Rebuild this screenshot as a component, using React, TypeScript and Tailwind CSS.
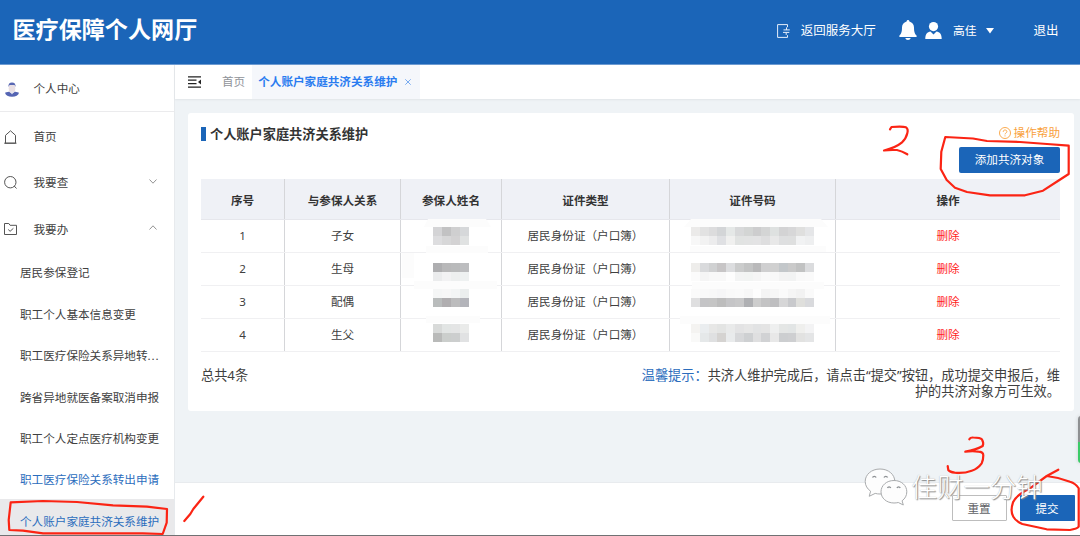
import clsx from "clsx";

const submenu = [
  { label: "居民参保登记" },
  { label: "职工个人基本信息变更" },
  { label: "职工医疗保险关系异地转", cut: true },
  { label: "跨省异地就医备案取消申报" },
  { label: "职工个人定点医疗机构变更" },
  { label: "职工医疗保险关系转出申请", visited: true },
  { label: "个人账户家庭共济关系维护", active: true },
];

const columns = ["序号", "与参保人关系", "参保人姓名", "证件类型", "证件号码", "操作"];

// Masked cells: two lines of grey tiles each
const rows = [
  {
    relation: "子女",
    shift: "top-0",
    name: ["#d4d4d6 #c2c2c3 #cfcfd0 #d6d8da", "#dddddf #d7d7d8 #d3d2d3 #e0e2e2"],
    code: [
      "#ebeae9 #e2e2e2 #dcdcdd #d3d5d7 #e5e8e7 #d8d9da #d3d5d4 #cdcdce #d4d5d5 #dee1e0 #d3d3d4 #d7d7d8 #dfdfde #e5e6e8",
      "#f7f7f7 #f2f2f2 #ececed #dfe0e3 #f0f0ef #e1e3e2 #e2e3e3 #e3e3e4 #dededf #e8e8e8 #dedfe0 #dedfdf #f1f2f3 #eeeff0",
    ],
  },
  {
    relation: "生母",
    shift: "top-[3px]",
    name: ["#aeaeb0 #b8b8b9 #b9babb #bcbdbf", "#ebeced #f2f2f3 #edefef #eef1f1"],
    code: [
      "#eeedeb #d9dadc #d0d1d2 #c7c5c6 #dcdddf #cbcccc #c3c4c4 #b9b9ba #cfcfd0 #d0d0d0 #c3c7ca #cacaca #c1c2c2 #dbdcde",
      "#fbfbfb #f5f5f5 #f8f8f8 #f8f8f8 #fdfdfd #f3f4f4 #f2f4f3 #f5f5f5 #f9f9f9 #f8f8f8 #f3f3f3 #f2f3f3 #f9f9f9 #fafafa",
    ],
  },
  {
    relation: "配偶",
    shift: "-top-1",
    name: ["#f5f6f6 #f7f7f7 #f3f5f5 #ebeeee", "#b9bcbc #b0aeb0 #bcbcbd #b3b4ba"],
    code: [
      "#fafafa #f9f9f9 #f8f8f8 #f6f6f7 #f9f9f9 #fafafa #f7f7f7 #fdfdfd #f4f4f4 #f6f6f6 #fafafa #f5f5f5 #f2f2f2 #fafafa",
      "#dfdfe0 #c4c4c6 #c5c5c5 #bdbdbd #c5c5c7 #c8c8c9 #afb0b3 #cdcdcd #c3c3c4 #bebec0 #d6d6d7 #c8c9cc #dfdfdc #d9dadd",
    ],
  },
  {
    relation: "生父",
    shift: "-top-0.5",
    name: ["#d8dad9 #e2e5e4 #e4e5e5 #eaebea", "#b9bab9 #cbcecc #cccece #e1e2e3"],
    code: [
      "#f4f3f1 #eaedef #e7e7e6 #e3e4e3 #e9eaea #e3e3e4 #e6e6e6 #e2e3e4 #e4e4e4 #eeefef #e4e6e5 #e2e5e5 #efefed #f3f3f4",
      "#f9f9f8 #e5e8e9 #dfe0e1 #d5d3d1 #e9ebec #d7d8da #ced0d2 #dfdfe0 #d1d2d4 #e8e8e8 #ccced0 #cecfd1 #e2e2e1 #e4e5e6",
    ],
  },
];

const grid = "grid grid-cols-[84px_116px_101px_168px_166px_1fr]";

function Mosaic({ lines, shift }: { lines: string[]; shift: string }) {
  return (
    <div className={clsx("relative bg-[#fdfdfd]", shift)}>
      {lines.map((line, i) => (
        <div key={i} className="flex">
          {line.split(" ").map((color, j) => (
            <span key={j} className="h-[9px] w-[8.8px]" style={{ backgroundColor: color }} />
          ))}
        </div>
      ))}
    </div>
  );
}

function Header() {
  return (
    <header className="flex h-[65px] shrink-0 items-center border-b border-[#6d9bd2] bg-[#1b65b8] pb-1 pl-[12.500px] pr-[21.500px] text-white">
      <h1 className="text-[23.1px] font-bold leading-none">医疗保障个人网厅</h1>
      <div className="ml-auto mt-0.5 flex items-center text-[12.5px]">
        <svg className="h-[14px] w-[13px]" viewBox="0 0 13 14" fill="none" stroke="#e6eefa" strokeWidth="1">
          <path d="M10.500 3.200V.6H.6v12.800h9.900v-2.200M9.500 3.400v2.500M6.500 5.900h6.300M6 8.400h6.300M9.200 8.400v2.500" />
        </svg>
        <span className="ml-[10.500px]">返回服务大厅</span>
        <svg className="-mt-0.5 ml-[23px] h-5 w-[18px]" viewBox="0 0 18 20" fill="white">
          <path d="M9 0c.8 0 1.3.6 1.4 1.4 3 .8 4.6 3.2 4.6 6.2 0 4.500.8 6.400 2.600 8v1.500H.4v-1.500C2.200 14 3 12.100 3 7.600c0-3 1.600-5.400 4.600-6.200C7.700.6 8.200 0 9 0zM6.300 18h5.400c-.3 1.300-1.300 2-2.700 2s-2.400-.7-2.700-2z" />
        </svg>
        <svg className="-mt-0.5 ml-2 h-[17px] w-[17px]" viewBox="0 0 17 17" fill="white">
          <circle cx="8.500" cy="4.600" r="4.600" />
          <path d="M.3 17c0-5 2-6.700 5.200-7.400l3 3 3-3C14.700 10.300 16.700 12 16.700 17z" />
        </svg>
        <span className="ml-[11px] text-[11.8px]">高佳</span>
        <svg className="ml-[10px] h-[6px] w-2" viewBox="0 0 8 6" fill="white">
          <path d="M0 0h8L4 5.500z" />
        </svg>
        <span className="ml-[39px]">退出</span>
      </div>
    </header>
  );
}

function Chevron({ up }: { up?: boolean }) {
  return (
    <svg
      className={clsx("mb-[3px] ml-auto h-[5px] w-2", up && "rotate-180")}
      viewBox="0 0 8 5"
      fill="none"
      stroke="#888"
      strokeWidth=".9"
    >
      <path d="M.5.5 4 4.200 7.500.5" />
    </svg>
  );
}

function Sidebar() {
  return (
    <aside className="flex w-[174px] shrink-0 flex-col overflow-hidden bg-white text-[11.6px] text-[#404040]">
      <div className="flex h-[47px] shrink-0 items-center border-b border-[#ebebed] pl-[5px] pt-0.5">
        <svg className="h-[15px] w-[14px]" viewBox="0 0 14 15">
          <path d="M0 10.800c2-.8 3.500-1 5-1h4c1.500 0 3 .2 5 1-.6 2.700-3.200 4-7 4s-6.400-1.300-7-4z" fill="#5565b3" />
          <ellipse cx="7" cy="6.500" rx="3.300" ry="4.700" fill="#e9dfe3" />
          <path d="M3.400 5C3.300 1.800 4.500.4 7 .4s3.700 1.400 3.600 4.600L9.500 2.900H4.600z" fill="#5968b3" />
          <path d="M5 9.600h4l-2 3z" fill="#e4e5f0" />
        </svg>
        <span className="ml-[14.500px]">个人中心</span>
      </div>
      <nav className="shrink-0">
        <div className="flex h-[46.300px] items-center pl-1 pt-[3px]">
          <svg className="h-[14px] w-[13px]" viewBox="0 0 13 14" fill="none" stroke="#555" strokeWidth="1">
            <path d="M1.500 13.200V5.300L6.500.8l5 4.500v7.900H.5h12" />
          </svg>
          <span className="ml-[16.500px]">首页</span>
        </div>
        <div className="flex h-[46.300px] items-center pl-1 pr-[17px] pt-[3px]">
          <svg className="h-[13px] w-[13px]" viewBox="0 0 13 13" fill="none" stroke="#555" strokeWidth="1">
            <circle cx="6.300" cy="6.200" r="5.700" />
            <path d="m10.200 10 2.300 2.500" />
          </svg>
          <span className="ml-[16.500px]">我要查</span>
          <Chevron />
        </div>
        <div className="flex h-[46.300px] items-center pl-1 pr-[17px] pt-[3px]">
          <svg className="h-3 w-[13px]" viewBox="0 0 13 12" fill="none" stroke="#555" strokeWidth="1">
            <path d="M.5 11.500V.5h4.300l1.300 1.800h6.400v9.200zM4.200 6.500l1.900 1.800 3.300-3" />
          </svg>
          <span className="ml-[16.500px]">我要办</span>
          <Chevron up />
        </div>
        {submenu.map((item) => (
          <div
            key={item.label}
            className={clsx(
              "flex h-[41.400px] items-center whitespace-nowrap pl-5 pt-[3px]",
              (item.visited || item.active) && "text-[#2b6dbd]",
              item.active && "bg-[#e9e9eb]"
            )}
          >
            {item.label}
            {item.cut && <span className="tracking-[0.9px]">...</span>}
          </div>
        ))}
      </nav>
    </aside>
  );
}

function TabBar() {
  return (
    <div className="flex h-[34px] shrink-0 items-center bg-white pl-[13px] text-[11.6px] shadow-[0_1px_2px_rgba(0,0,0,0.06)]">
      <svg className="h-3 w-[13px]" viewBox="0 0 13 12" stroke="#222" strokeWidth="1.200">
        <path d="M0 .8h13M0 4.200h8.500M0 7.700h8.500M0 11.200h13" />
        <path d="M13 3.500v5L10 6z" fill="#222" stroke="none" />
      </svg>
      <span className="ml-[21px] text-[#909399]">首页</span>
      <div className="ml-[7px] flex h-full w-[168px] items-center bg-[#f5f7fb] pl-1.5 text-[#2a7cf0]">
        <span className="font-bold">个人账户家庭共济关系维护</span>
        <svg className="ml-2 h-[6px] w-[6px]" viewBox="0 0 6 6" stroke="#6ba3ee" strokeWidth=".9">
          <path d="m.3.3 5.400 5.400M5.700.3.3 5.700" />
        </svg>
      </div>
    </div>
  );
}

function FamilyTable() {
  return (
    <div className="mt-[7px] text-[11.6px] text-[#404040]">
      <div className={clsx(grid, "h-[41px] border-b border-[#e6e7ec] bg-[#eff1f6] font-bold text-[#333]")}>
        {columns.map((c, i) => (
          <div key={c} className={clsx("flex items-center justify-center pt-[3px]", i < 5 && "border-r border-[#d5d6d9]")}>
            {c}
          </div>
        ))}
      </div>
      {rows.map((row) => (
        <div key={row.relation} className={clsx(grid, "h-[33px] border-b border-[#f0f0f2] *:flex *:items-center *:justify-center")}>
          <div className="border-r border-[#d5d6d9]">{rows.indexOf(row) + 1}</div>
          <div className="border-r border-[#d5d6d9]">{row.relation}</div>
          <div className="border-r border-[#d5d6d9]">
            <Mosaic lines={row.name} shift={row.shift} />
          </div>
          <div className="border-r border-[#d5d6d9]">居民身份证（户口簿）</div>
          <div className="border-r border-[#d5d6d9]">
            <Mosaic lines={row.code} shift={row.shift} />
          </div>
          <div className="text-[#ff2222]">删除</div>
        </div>
      ))}
    </div>
  );
}

function RelationCard() {
  return (
    <section className="ml-[13px] mr-[6.500px] mt-[14px] h-[298px] rounded-[3px] bg-white pl-[13px] pr-[13.500px] pt-[11px]">
      <div className="flex h-12 items-start justify-between">
        <h2 className="mt-[3px] flex items-center text-[13.200px] font-bold leading-[14px] text-[#333]">
          <span className="mr-1 h-[14px] w-[5px] bg-[#1b65b8]" />
          个人账户家庭共济关系维护
        </h2>
        <div className="flex flex-col items-end text-[11.6px]">
          <span className="flex h-[18px] items-center gap-[3px] text-[#f9a13c]">
            <svg className="h-3 w-3" viewBox="0 0 12 12" fill="none" stroke="currentColor" strokeWidth=".9">
              <circle cx="6" cy="6" r="5.500" />
              <path d="M4.200 4.800c0-2.600 3.700-2.300 3.700-.1C7.900 6 6 6 6 7.400M6 8.400v1" />
            </svg>
            操作帮助
          </span>
          <button className="mt-[5px] h-[26px] w-[101px] rounded-[2px] bg-[#1b65b8] text-white">添加共济对象</button>
        </div>
      </div>
      <FamilyTable />
      <div className="mt-4 flex justify-between text-[13.200px] leading-[15.500px] text-[#404040]">
        <span>总共4条</span>
        <p className="whitespace-nowrap text-right">
          <span className="text-[#2b6dbd]">温馨提示：</span>
          共济人维护完成后，请点击“提交”按钮，成功提交申报后，维
          <br />
          护的共济对象方可生效。
        </p>
      </div>
    </section>
  );
}

// Soft brush marks left around the masked columns
function Smudges() {
  return (
    <svg className="pointer-events-none absolute left-0 top-0 h-[536px] w-[1080px]" fill="#fcfcfc">
      <path d="M424 227l4-8h58l5 8zM426 246h62v7h-62zM402 253h12v25h-12zM414 281h83v8h-83zM426 316h54v7h-54z" />
      <path d="M684 227l7-8h130l7 8zM690 246h136v6H690zM692 282h132v7H692zM680 316h150v8H680z" />
    </svg>
  );
}

function Watermark() {
  return (
    <div className="pointer-events-none absolute left-[864px] top-[467px] flex items-center">
      <svg className="h-[40px] w-[44px]" viewBox="0 0 44 40" fill="#fdfdfd" stroke="#a9abad" strokeWidth="1">
        <path d="M16 2C7.500 2 1.200 7.500 1.200 14.500c0 4 2 7.300 5.400 9.700L5.200 29.300l6-2.900c1.700.5 3.200.6 4.800.6 8.500 0 14.800-5.500 14.800-12.500S24.500 2 16 2z" />
        <path d="M30 13.500c-7.500 0-13 5-13 11.300S22.500 36 30 36c1.500 0 2.900-.2 4.300-.5l5 2.500-1.200-4.200c3-2.200 4.700-5.300 4.700-9 0-6.300-5.300-11.300-12.800-11.300z" />
        <path
          d="M8.500 10.500a2 2 0 0 1 3.600 0M20 10.500a2 2 0 0 1 3.600 0M23.500 21a1.700 1.700 0 0 1 3.200 0M33 21a1.700 1.700 0 0 1 3.200 0"
          fill="none"
          stroke="#8e9194"
          strokeWidth="1.400"
        />
      </svg>
      <span className="ml-[3px] whitespace-nowrap text-[26.300px] font-light leading-none text-white [text-shadow:1px_1px_1px_#888,0_0_1px_#aaa]">
        佳财一分钟
      </span>
    </div>
  );
}

// Red pen marks for the three steps
function PenMarks() {
  return (
    <svg
      className="pointer-events-none absolute left-0 top-0 h-[536px] w-[1080px]"
      fill="none"
      stroke="#fb2414"
      strokeWidth="2.200"
      strokeLinecap="round"
      strokeLinejoin="round"
    >
      <path d="M10.700 502.300 43 501l34 1 36 3.300 34 1.400 20 2.300-.3 13.700-4 11.300-20-.7H43l-20-2.600-13.700-.7L8.700 520z" />
      <path d="M203.300 496.700 193.300 509l-3 5-6 7" />
      <path d="M890 129.300 891.500 127q11-1 14.500.3 2.500 1.700 1.300 6-1 5-5.600 9.400-6 5-17.700 7.800 6-1 13-.5 5 1 10.300 4.300" />
      <path d="M945.300 137 973 138.500 987 141l33 1 27 2 21.700 1.700V174l-12 7.700-13.700 9-18 4.600h-35L967 192l-12-4.300-8.300-7.700-6-11 .6-17.300z" />
      <path d="M969.300 439.300q1-2 4-1.800 7 0 8.700 2 2 3.500.7 6.500-7 4-17.400 5.700 8-1 13 0 5 0 5 3.600 0 5-1.600 8-4 5.500-10 7.400-8 3-17 2-5-.7-6.400-2.700l-.6-4" />
      <path d="M1058.300 469.700 1046.700 476 1030 488.300q-14 7-17 14-3 9 .3 14.400 3 5 9 7.300l24.400 5.300 23.300.7q7-1 8.700-3.300v-38.400q-3-5-8.700-6.600-12-4.500-23.300-5.700" />
    </svg>
  );
}

export default function App() {
  return (
    <div className="relative flex h-[536px] w-[1080px] flex-col overflow-hidden bg-[#eff3f6] font-['Noto_Sans','Noto_Sans_CJK_SC',sans-serif]">
      <Header />
      <div className="flex min-h-0 flex-1">
        <Sidebar />
        <main className="flex min-w-0 flex-1 flex-col border-l border-[#e7eaed]">
          <TabBar />
          <RelationCard />
          <footer className="mt-auto flex h-[54px] shrink-0 items-start justify-end gap-[13px] border-t border-[#e8ebee] bg-white pr-[5.500px] pt-3 text-[11.6px]">
            <button className="h-[26px] w-[55px] rounded-[1px] border border-[#bdbdbd] bg-white pt-px text-[#606266]">重置</button>
            <button className="h-[26px] w-[55px] rounded-[1px] bg-[#1b65b8] pt-px text-white">提交</button>
          </footer>
        </main>
      </div>
      <Smudges />
      <PenMarks />
      <Watermark />
      {/* floating widget peeking in from the right edge */}
      <div className="absolute left-[1078px] top-[416px] h-[47px] w-3 rounded-l-[3px] bg-linear-to-b from-[#8e9092] from-55% to-[#3ccb68] to-55% shadow-[0_0_4px_rgba(0,0,0,0.15)]" />
      <div className="absolute bottom-0 left-0 h-px w-full bg-[#707173]" />
    </div>
  );
}
